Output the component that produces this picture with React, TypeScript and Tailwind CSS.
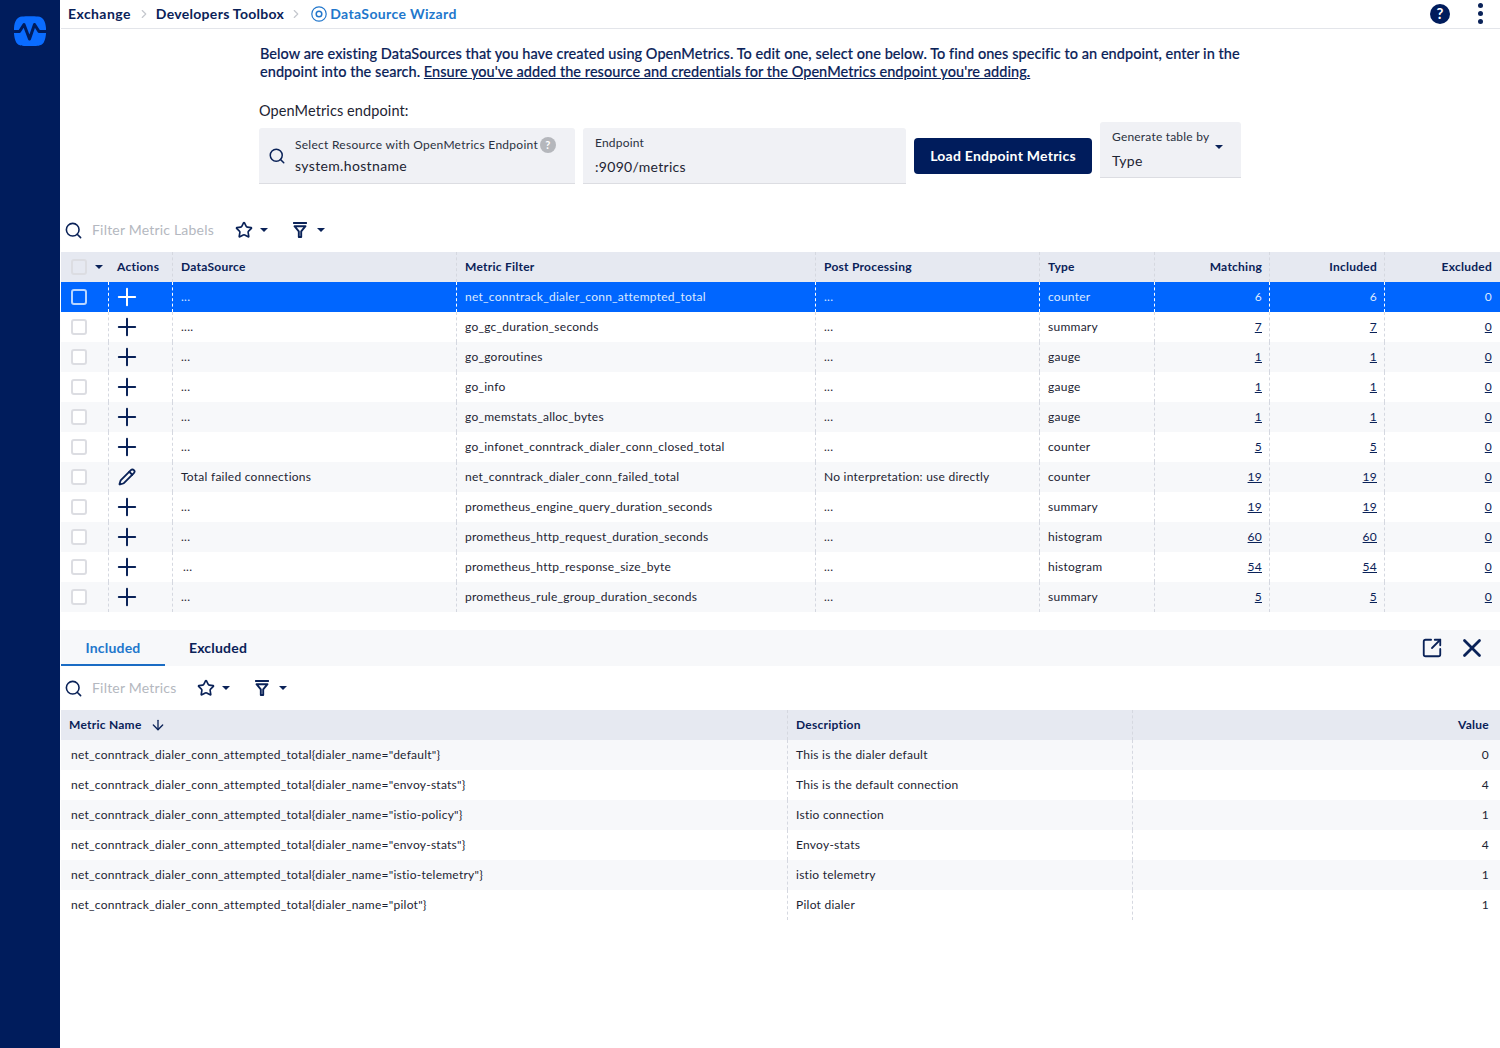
import { Search, Star, ChevronRight, Plus, Pencil, X, ArrowDown, SquareArrowOutUpRight } from "lucide-react";

const navy = "text-[#0a2258]";

type MetricRow = {
  name: string;
  filter: string;
  post: string;
  type: string;
  matching: number;
  included: number;
  excluded: number;
  edit?: boolean;
  nudge?: boolean;
};

const rows: MetricRow[] = [
  { name: "...", filter: "net_conntrack_dialer_conn_attempted_total", post: "...", type: "counter", matching: 6, included: 6, excluded: 0 },
  { name: "....", filter: "go_gc_duration_seconds", post: "...", type: "summary", matching: 7, included: 7, excluded: 0 },
  { name: "...", filter: "go_goroutines", post: "...", type: "gauge", matching: 1, included: 1, excluded: 0 },
  { name: "...", filter: "go_info", post: "...", type: "gauge", matching: 1, included: 1, excluded: 0 },
  { name: "...", filter: "go_memstats_alloc_bytes", post: "...", type: "gauge", matching: 1, included: 1, excluded: 0 },
  { name: "...", filter: "go_infonet_conntrack_dialer_conn_closed_total", post: "...", type: "counter", matching: 5, included: 5, excluded: 0 },
  { name: "Total failed connections", filter: "net_conntrack_dialer_conn_failed_total", post: "No interpretation: use directly", type: "counter", matching: 19, included: 19, excluded: 0, edit: true },
  { name: "...", filter: "prometheus_engine_query_duration_seconds", post: "...", type: "summary", matching: 19, included: 19, excluded: 0 },
  { name: "...", filter: "prometheus_http_request_duration_seconds", post: "...", type: "histogram", matching: 60, included: 60, excluded: 0 },
  { name: "...", filter: "prometheus_http_response_size_byte", post: "...", type: "histogram", matching: 54, included: 54, excluded: 0, nudge: true },
  { name: "...", filter: "prometheus_rule_group_duration_seconds", post: "...", type: "summary", matching: 5, included: 5, excluded: 0 },
];

const details = [
  { name: 'net_conntrack_dialer_conn_attempted_total{dialer_name="default"}', desc: "This is the dialer default", value: 0 },
  { name: 'net_conntrack_dialer_conn_attempted_total{dialer_name="envoy-stats"}', desc: "This is the default connection", value: 4 },
  { name: 'net_conntrack_dialer_conn_attempted_total{dialer_name="istio-policy"}', desc: "Istio connection", value: 1 },
  { name: 'net_conntrack_dialer_conn_attempted_total{dialer_name="envoy-stats"}', desc: "Envoy-stats", value: 4 },
  { name: 'net_conntrack_dialer_conn_attempted_total{dialer_name="istio-telemetry"}', desc: "istio telemetry", value: 1 },
  { name: 'net_conntrack_dialer_conn_attempted_total{dialer_name="pilot"}', desc: "Pilot dialer", value: 1 },
];

const metricCols = "grid grid-cols-[47px_64px_284px_359px_224px_115px_115px_115px_116px]";
const detailCols = "grid grid-cols-[726px_345px_368px]";
const dashed = "border-l border-dashed border-[#d5d8e0]";

function Caret() {
  return <span className="inline-block w-0 h-0 border-x-[4px] border-x-transparent border-t-[4px] border-t-[#0a2258]" />;
}

function FunnelIcon() {
  return (
    <svg width="14" height="16" viewBox="0 0 14 16" fill="none" className="text-[#0a2258]">
      <path d="M1 1h12" stroke="currentColor" strokeWidth="2.2" strokeLinecap="round" />
      <path d="M1.5 4.2h11L8.2 9.4V15H5.8V9.4z" stroke="currentColor" strokeWidth="1.9" strokeLinejoin="round" />
    </svg>
  );
}

function FilterBar({ placeholder }: { placeholder: string }) {
  return (
    <div className="flex items-center h-full pl-[3px]">
      <Search size={19} strokeWidth={2} className={navy} />
      <span className="ml-[9px] mr-[21px] -mt-px text-[14px] text-[#b4b8c0] tracking-[0.2px]">{placeholder}</span>
      <Star size={18} strokeWidth={2.2} className={navy} />
      <span className="ml-[7px] flex"><Caret /></span>
      <span className="ml-[25px] flex"><FunnelIcon /></span>
      <span className="ml-[10px] flex"><Caret /></span>
    </div>
  );
}

function Checkbox({ active }: { active?: boolean }) {
  return (
    <span
      className={`block w-[16px] h-[16px] rounded-[3px] border-2 ${
        active ? "border-[#b9d6ff] bg-[#0066ff]" : "border-[#dcdde2] bg-white"
      }`}
    />
  );
}

function Logo() {
  return (
    <svg width="32" height="30" viewBox="0 0 32 30">
      <path d="M8 0.5C12 0 20 0 24 0.5C29 1 31.5 5 32 12C32.3 16 32 22 30 26C28.5 29 26 29.6 22 30C18 30.3 14 30.3 10 30C6 29.6 3.5 29 2 26C0 22-0.3 16 0 12C0.5 5 3 1 8 0.5z" fill="#0a6cff" />
      <path d="M0 15.5h5.5L10 8.5l5.5 14.5 5-14.5 4.5 7h7" fill="none" stroke="#001c5c" strokeWidth="3" strokeLinejoin="round" />
    </svg>
  );
}

export default function App() {
  return (
    <div className="flex h-[1048px] w-[1500px] overflow-hidden bg-white text-[#1d2433] font-['Lato','Liberation_Sans',sans-serif]">
      <aside className="w-[60px] shrink-0 bg-[#001c5c] pt-[16px] flex justify-center items-start">
        <Logo />
      </aside>

      <main className="flex-1 min-w-0 flex flex-col pl-px">
        <header className="h-[29px] shrink-0 border-b border-[#e3e5ea] flex items-center pb-[1px] pl-[7px] pr-[15px]">
          <span className={`text-[14px] font-bold tracking-[0.42px] ${navy}`}>Exchange</span>
          <ChevronRight size={14} className="ml-[6px] mr-[5px] text-[#c5c8ce]" />
          <span className={`text-[14px] font-bold tracking-[0.3px] ${navy}`}>Developers Toolbox</span>
          <ChevronRight size={14} className="mx-[5px] text-[#c5c8ce]" />
          <svg width="16" height="16" viewBox="0 0 16 16" fill="none" className="ml-[3px] mr-[3px]">
            <circle cx="8" cy="8" r="7.2" stroke="#2277cc" strokeWidth="1.2" />
            <circle cx="8" cy="8" r="2.8" stroke="#2277cc" strokeWidth="1.5" />
          </svg>
          <span className="text-[14px] font-bold tracking-[0.36px] text-[#2277cc]">DataSource Wizard</span>
          <span className="ml-auto flex items-center gap-[28px]">
            <span className="w-[20px] h-[20px] rounded-full bg-[#001c5c] text-white text-[15px] font-bold flex items-center justify-center">?</span>
            <span className="flex flex-col gap-[3px] mr-[2px]">
              <span className="w-[5px] h-[5px] rounded-full bg-[#0a2258]" />
              <span className="w-[5px] h-[5px] rounded-full bg-[#0a2258]" />
              <span className="w-[5px] h-[5px] rounded-full bg-[#0a2258]" />
            </span>
          </span>
        </header>

        <section className="pl-[198px]">
          <p className={`mt-[16px] ml-px text-[14.5px] leading-[18px] font-medium tracking-[0.05px] [-webkit-text-stroke:0.15px] ${navy}`}>
            Below are existing DataSources that you have created using OpenMetrics. To edit one, select one below. To find ones specific to an endpoint, enter in the
            <br />
            endpoint into the search. <span className="underline">Ensure you've added the resource and credentials for the OpenMetrics endpoint you're adding.</span>
          </p>
          <p className="mt-[21px] text-[14.5px] leading-[18px] text-[#1d2433] tracking-[0.1px]">OpenMetrics endpoint:</p>

          <div className="mt-[6px] flex items-start">
            <div className="mt-[2px] w-[316px] h-[56px] bg-[#f0f1f5] border-b border-[#dcdde2] rounded-t-[3px] flex items-center pl-[9px]">
              <Search size={18} strokeWidth={2} className={navy} />
              <div className="ml-[9px]">
                <div className="flex items-center text-[12px] leading-[16px] tracking-[0.27px] text-[#2a3040]">
                  Select Resource with OpenMetrics Endpoint
                  <span className="ml-[2px] w-[16px] h-[16px] rounded-full bg-[#b5b7bc] text-white text-[11px] font-bold flex items-center justify-center">?</span>
                </div>
                <div className="mt-[4px] text-[14px] leading-[18px] tracking-[0.35px]">system.hostname</div>
              </div>
            </div>
            <div className="mt-[2px] ml-[8px] w-[323px] h-[56px] bg-[#f0f1f5] border-b border-[#dcdde2] rounded-t-[3px] pl-[12px] pt-[7px]">
              <div className="text-[12px] leading-[16px] tracking-[0.2px] text-[#2a3040]">Endpoint</div>
              <div className="mt-[7px] text-[14px] leading-[18px] tracking-[0.3px]">:9090/metrics</div>
            </div>
            <button className="mt-[12px] ml-[8px] w-[178px] h-[36px] pb-[2px] rounded-[4px] bg-[#001c5c] text-white text-[14px] font-bold tracking-[0.25px]">
              Load Endpoint Metrics
            </button>
            <div className="relative -mt-[4px] ml-[8px] w-[141px] h-[56px] bg-[#f0f1f5] border-b border-[#dcdde2] rounded-t-[3px] pl-[12px] pt-[7px]">
              <div className="text-[12px] leading-[16px] tracking-[0.2px] text-[#2a3040]">Generate table by</div>
              <div className="mt-[7px] text-[14px] leading-[18px] tracking-[0.3px]">Type</div>
              <span className="absolute right-[18px] top-[23px] flex"><Caret /></span>
            </div>
          </div>
        </section>

        <div className="h-[30px] mt-[31px] shrink-0">
          <FilterBar placeholder="Filter Metric Labels" />
        </div>

        <div className="mt-[7px] shrink-0 text-[12px]">
          <div className={`${metricCols} h-[30px] items-stretch bg-[#e6e9f1] font-bold tracking-[0.25px] ${navy}`}>
            <div className="flex items-center pl-[10px] gap-[8px]">
              <span className="block w-[16px] h-[16px] rounded-[3px] border-2 border-[#dcdde2]" />
              <Caret />
            </div>
            <div className="flex items-center pl-[9px]">Actions</div>
            <div className={`flex items-center pl-[8px] ${dashed}`}>DataSource</div>
            <div className={`flex items-center pl-[8px] ${dashed}`}>Metric Filter</div>
            <div className={`flex items-center pl-[8px] ${dashed}`}>Post Processing</div>
            <div className={`flex items-center pl-[8px] ${dashed}`}>Type</div>
            <div className={`flex items-center justify-end pr-[7px] ${dashed}`}>Matching</div>
            <div className={`flex items-center justify-end pr-[7px] ${dashed}`}>Included</div>
            <div className={`flex items-center justify-end pr-[8px] ${dashed}`}>Excluded</div>
          </div>
          {rows.map((row, i) => {
            const selected = i === 0;
            const line = selected ? "border-l border-dashed border-white" : dashed;
            const bg = selected ? "bg-[#0066ff] text-[#dbe9ff]" : i % 2 === 0 ? "bg-[#f7f8fa] text-[#1d2433]" : "bg-white text-[#1d2433]";
            const numCls = selected ? "" : `underline ${navy}`;
            return (
              <div key={i} className={`${metricCols} h-[30px] items-stretch tracking-[0.25px] ${bg}`}>
                <div className="flex items-center pl-[10px]">
                  <Checkbox active={selected} />
                </div>
                <div className={`flex items-center ${row.edit ? "pl-[9px]" : "pl-[4px]"} ${line}`}>
                  {row.edit ? (
                    <Pencil size={18} strokeWidth={2.4} className={navy} />
                  ) : (
                    <Plus size={28} strokeWidth={1.7} className={selected ? "text-white" : navy} />
                  )}
                </div>
                <div className={`flex items-center ${row.nudge ? "pl-[10px]" : "pl-[8px]"} ${line}`}>{row.name}</div>
                <div className={`flex items-center pl-[8px] ${line}`}>{row.filter}</div>
                <div className={`flex items-center pl-[8px] ${line}`}>{row.post}</div>
                <div className={`flex items-center pl-[8px] ${line}`}>{row.type}</div>
                <div className={`flex items-center justify-end pr-[7px] ${line}`}><span className={numCls}>{row.matching}</span></div>
                <div className={`flex items-center justify-end pr-[7px] ${line}`}><span className={numCls}>{row.included}</span></div>
                <div className={`flex items-center justify-end pr-[8px] ${line}`}><span className={numCls}>{row.excluded}</span></div>
              </div>
            );
          })}
        </div>

        <div className="mt-[18px] h-[36px] shrink-0 bg-[#f7f8fa] flex items-stretch pr-[13px]">
          <div className="w-[104px] flex items-center justify-center border-b-2 border-[#1a6cc4] text-[14px] font-bold tracking-[0.2px] text-[#2277cc]">Included</div>
          <div className={`w-[106px] flex items-center justify-center border-b-2 border-transparent text-[14px] font-bold tracking-[0.2px] ${navy}`}>Excluded</div>
          <div className="ml-auto flex items-center gap-[14px]">
            <SquareArrowOutUpRight size={22} strokeWidth={2} className={navy} />
            <X size={30} strokeWidth={2.2} className={navy} />
          </div>
        </div>

        <div className="h-[44px] shrink-0">
          <FilterBar placeholder="Filter Metrics" />
        </div>

        <div className="shrink-0 text-[12px]">
          <div className={`${detailCols} h-[30px] items-stretch bg-[#e6e9f1] font-bold tracking-[0.25px] ${navy}`}>
            <div className="flex items-center pl-[8px]">
              Metric Name
              <ArrowDown size={16} strokeWidth={2} className="ml-[8px]" />
            </div>
            <div className={`flex items-center pl-[8px] ${dashed}`}>Description</div>
            <div className={`flex items-center justify-end pr-[11px] ${dashed}`}>Value</div>
          </div>
          {details.map((d, i) => (
            <div key={i} className={`${detailCols} h-[30px] items-stretch tracking-[0.25px] ${i % 2 === 0 ? "bg-[#f7f8fa]" : "bg-white"}`}>
              <div className="flex items-center pl-[10px]">{d.name}</div>
              <div className={`flex items-center pl-[8px] ${dashed}`}>{d.desc}</div>
              <div className={`flex items-center justify-end pr-[11px] ${dashed}`}>{d.value}</div>
            </div>
          ))}
        </div>
      </main>
    </div>
  );
}
